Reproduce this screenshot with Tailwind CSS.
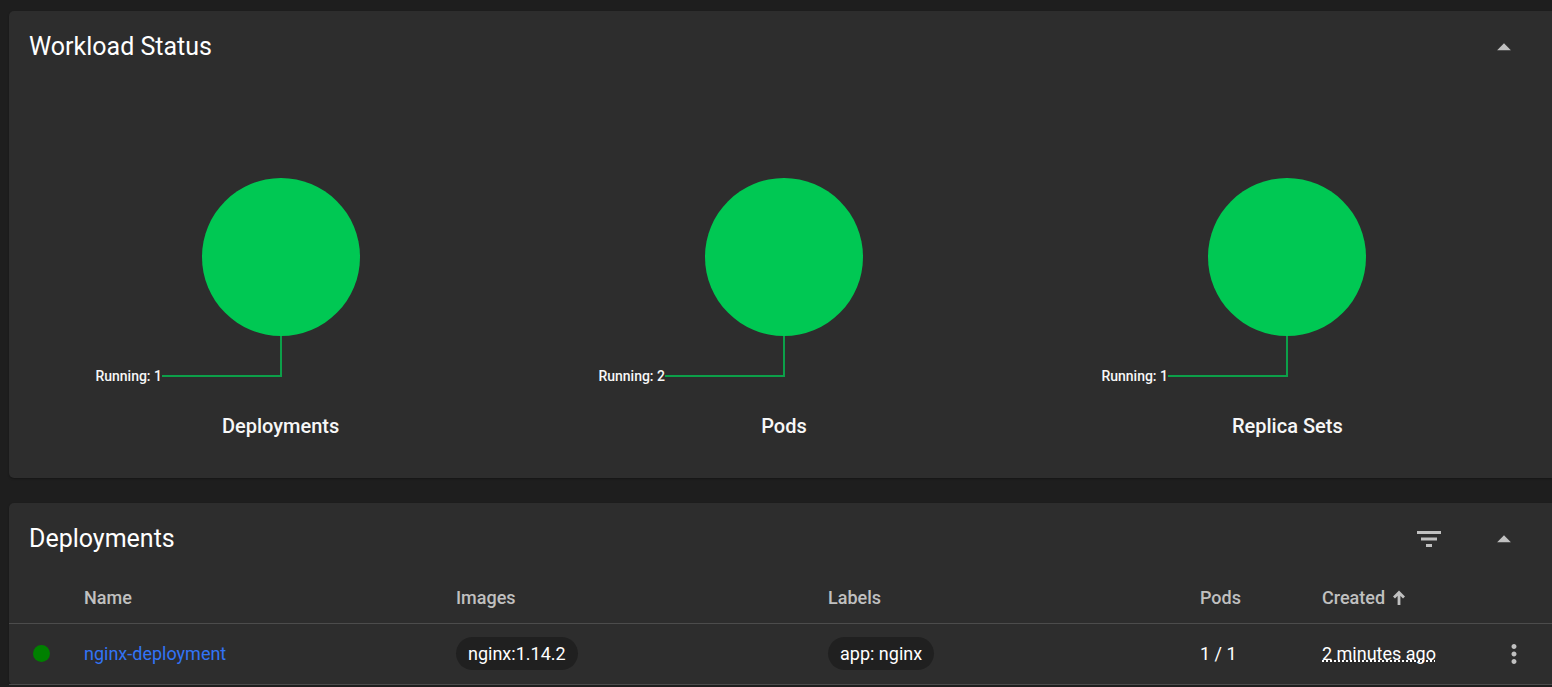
<!DOCTYPE html>
<html lang="en">
<head>
<meta charset="utf-8">
<meta name="viewport" content="width=device-width, initial-scale=1">
<title>Workloads</title>
<script src="https://cdn.jsdelivr.net/npm/@tailwindcss/browser@4"></script>
</head>
<body class="bg-[#1e1e1e] font-[Roboto,sans-serif] text-lg text-white">
<main class="flex flex-col gap-[25px] overflow-hidden pt-[11px] pl-[9px]">

  <section class="rounded-l-[5px] bg-[#2d2d2d] pb-[38px] shadow-[0_1px_2px_rgba(0,0,0,0.3)]" aria-labelledby="status-title">
    <header class="flex h-[71px] items-center justify-between pr-[33px] pl-5">
      <h2 id="status-title" class="text-[25px] leading-[30px]">Workload Status</h2>
      <button type="button" aria-label="Collapse workload status" class="flex size-[30px] items-center justify-center text-[#c0c0c0]">
        <svg class="size-[30px]" viewBox="0 0 24 24" fill="currentColor"><path d="M6.500 14.500l5.500-5.500 5.500 5.500z"/></svg>
      </button>
    </header>
    <div class="grid grid-cols-3 pt-24 pr-[13px] pl-5 text-[#f7f7f7]">
      <figure class="flex flex-col items-center">
        <svg class="h-[212px] w-[400px]" viewBox="0 0 400 212" role="img" aria-label="Deployments, running: 1">
          <circle cx="200" cy="79" r="79" fill="#00c853"/>
          <path d="M200 158V198H81" fill="none" stroke="#0c9f49" stroke-width="2"/>
          <text x="81" y="203" text-anchor="end" fill="#f7f7f7" font-size="14" font-weight="500">Running: 1</text>
        </svg>
        <figcaption class="pt-[22px] text-xl leading-7 font-medium">Deployments</figcaption>
      </figure>
      <figure class="flex flex-col items-center">
        <svg class="h-[212px] w-[400px]" viewBox="0 0 400 212" role="img" aria-label="Pods, running: 2">
          <circle cx="200" cy="79" r="79" fill="#00c853"/>
          <path d="M200 158V198H81" fill="none" stroke="#0c9f49" stroke-width="2"/>
          <text x="81" y="203" text-anchor="end" fill="#f7f7f7" font-size="14" font-weight="500">Running: 2</text>
        </svg>
        <figcaption class="pt-[22px] text-xl leading-7 font-medium">Pods</figcaption>
      </figure>
      <figure class="flex flex-col items-center">
        <svg class="h-[212px] w-[400px]" viewBox="0 0 400 212" role="img" aria-label="Replica Sets, running: 1">
          <circle cx="200" cy="79" r="79" fill="#00c853"/>
          <path d="M200 158V198H81" fill="none" stroke="#0c9f49" stroke-width="2"/>
          <text x="81" y="203" text-anchor="end" fill="#f7f7f7" font-size="14" font-weight="500">Running: 1</text>
        </svg>
        <figcaption class="pt-[22px] text-xl leading-7 font-medium">Replica Sets</figcaption>
      </figure>
    </div>
  </section>

  <section class="rounded-l-[5px] bg-[#2d2d2d] shadow-[0_1px_2px_rgba(0,0,0,0.3)]" aria-labelledby="deployments-title">
    <header class="flex h-[71px] items-center justify-between pr-[33px] pl-5">
      <h2 id="deployments-title" class="text-[25px] leading-[30px]">Deployments</h2>
      <div class="flex items-center gap-[45px] text-[#c0c0c0]">
        <button type="button" aria-label="Filter" class="flex size-[30px] items-center justify-center">
          <svg class="size-8 shrink-0" viewBox="0 0 32 32" fill="currentColor"><path d="M4 8h24v3H4zM8 14.500h16v3H8zM13 21h6v3h-6z"/></svg>
        </button>
        <button type="button" aria-label="Collapse deployments" class="flex size-[30px] items-center justify-center">
          <svg class="size-[30px]" viewBox="0 0 24 24" fill="currentColor"><path d="M6.500 14.500l5.500-5.500 5.500 5.500z"/></svg>
        </button>
      </div>
    </header>
    <table class="w-full table-fixed text-left">
      <colgroup>
        <col class="w-[75px]"><col><col><col><col class="w-[122px]"><col class="w-[172px]"><col class="w-[58px]">
      </colgroup>
      <thead class="text-[#c0c0c0]">
        <tr class="h-[49px] border-b border-[#4c4c4c]">
          <td></td>
          <th class="font-medium" scope="col">Name</th>
          <th class="font-medium" scope="col">Images</th>
          <th class="font-medium" scope="col">Labels</th>
          <th class="font-medium" scope="col">Pods</th>
          <th class="font-medium" scope="col">
            <button type="button" class="flex items-center gap-2">Created
              <svg class="h-4 w-3" viewBox="0 0 12 16" fill="none" stroke="currentColor" stroke-width="2.800"><path d="M6 15V2M1 7.500L6 2.500l5 5"/></svg>
            </button>
          </th>
          <td></td>
        </tr>
      </thead>
      <tbody>
        <tr class="h-[61px] border-b border-[#4c4c4c]">
          <td class="pl-6"><svg class="size-[17px]" viewBox="0 0 17 17" role="img" aria-label="Running"><circle cx="8.500" cy="8.500" r="8.500" fill="#008000"/></svg></td>
          <td><a href="#" class="text-[#3274f6]">nginx-deployment</a></td>
          <td><span class="inline-flex h-[33px] items-center rounded-full bg-[#202020] px-3">nginx:1.14.2</span></td>
          <td><span class="inline-flex h-[33px] items-center rounded-full bg-[#202020] px-3">app: nginx</span></td>
          <td>1 / 1</td>
          <td><span class="underline decoration-dotted decoration-2 underline-offset-1 [text-decoration-skip-ink:none]">2 minutes ago</span></td>
          <td class="pl-[5px]">
            <button type="button" aria-label="More actions" class="flex size-[30px] items-center justify-center text-[#c0c0c0]">
              <svg class="size-[30px]" viewBox="0 0 24 24" fill="currentColor"><path d="M12 8c1.100 0 2-.9 2-2s-.9-2-2-2-2 .9-2 2 .9 2 2 2zm0 2c-1.100 0-2 .9-2 2s.9 2 2 2 2-.9 2-2-.9-2-2-2zm0 6c-1.100 0-2 .9-2 2s.9 2 2 2 2-.9 2-2-.9-2-2-2z"/></svg>
            </button>
          </td>
        </tr>
      </tbody>
    </table>
  </section>
</main>
</body>
</html>
